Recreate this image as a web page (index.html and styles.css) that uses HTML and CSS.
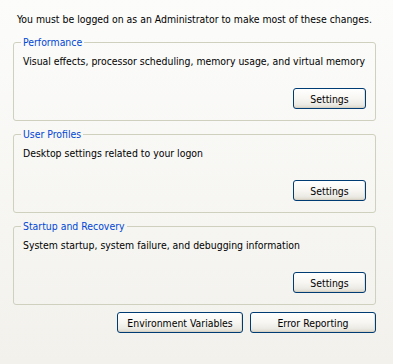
FILE: index.html
```html
<!DOCTYPE html>
<html lang="en">
<head>
  <meta charset="UTF-8" />
  <title>System Properties – Advanced</title>
  <link rel="stylesheet" href="styles.css">
</head>
<body>
  <div class="tab-page">
    <p class="note">You must be logged on as an Administrator to make most of these changes.</p>

    <!-- Performance -->
    <fieldset class="group">
      <legend>Performance</legend>
      <p class="desc">Visual effects, processor scheduling, memory usage, and virtual memory</p>
      <div class="group-actions"><button class="btn">Settings</button></div>
    </fieldset>

    <!-- User Profiles -->
    <fieldset class="group">
      <legend>User Profiles</legend>
      <p class="desc">Desktop settings related to your logon</p>
      <div class="group-actions"><button class="btn">Settings</button></div>
    </fieldset>

    <!-- Startup and Recovery -->
    <fieldset class="group">
      <legend>Startup and Recovery</legend>
      <p class="desc">System startup, system failure, and debugging information</p>
      <div class="group-actions"><button class="btn">Settings</button></div>
    </fieldset>

    <div class="page-actions">
      <button class="btn btn-wide">Environment Variables</button>
      <button class="btn btn-wide">Error Reporting</button>
    </div>
  </div>
</body>
</html>
```

FILE: styles.css
```css
:root {
  --legend: #0046d5;
  --frame: #d0d0bf;
  --btn-border: #003c74;
  --text: #000;
}
* { box-sizing: border-box; margin: 0; padding: 0; }
body {
  font-family: 'DejaVu Sans Condensed', 'DejaVu Sans', sans-serif;
  font-size: 10.4px;
  color: var(--text);
}
.tab-page {
  width: 393px;
  height: 364px;
  background: linear-gradient(#fcfcfb, #f2f1ec);
  padding: 12px 17px 0 13px;
  overflow: hidden;
}
.note { padding-left: 4px; line-height: 14px; margin-bottom: 10px; white-space: nowrap; }

/* Group boxes */
.group {
  border: 1px solid var(--frame);
  border-radius: 3px;
  padding: 0 9px 11px 9px;
  margin-bottom: 7px;
}
.group legend {
  color: var(--legend);
  padding: 0 2px;
  margin-left: -2px;
  line-height: 13px;
}
.desc { line-height: 14px; margin-top: 5px; white-space: nowrap; }
.group-actions { display: flex; justify-content: flex-end; margin-top: 20px; }

/* XP style push buttons */
.btn {
  font: inherit;
  color: var(--text);
  width: 73px;
  height: 21px;
  border: 1px solid var(--btn-border);
  border-radius: 3px;
  background: linear-gradient(#ffffff 0%, #f7f6f2 50%, #ecebe5 80%, #dcd8cc 100%);
  box-shadow: inset 0 -1px 0 #d6d0c5, inset -1px 0 0 #e3e0d6;
  cursor: pointer;
}
.page-actions {
  display: flex;
  justify-content: flex-end;
  gap: 7px;
  margin-top: 7px;
}
.btn-wide { width: 126px; }
```
